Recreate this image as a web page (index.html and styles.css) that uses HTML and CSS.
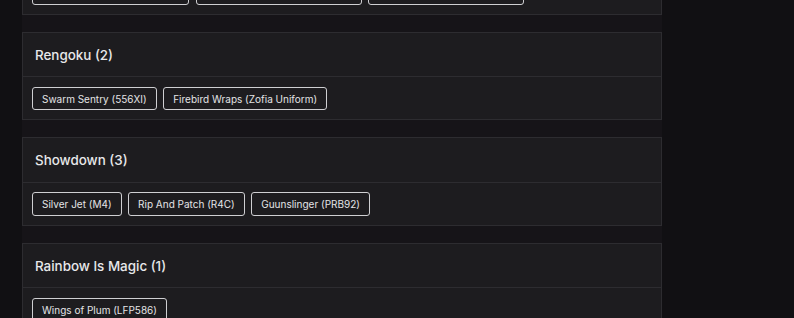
FILE: index.html
```html
<!DOCTYPE html>
<html lang="en">
<head>
<meta charset="utf-8">
<title>Collections</title>
<link rel="stylesheet" href="styles.css">
</head>
<body>
<main class="column">
  <section class="card">
    <header class="card-head"><h2 class="card-title">Outbreak (3)</h2></header>
    <div class="card-body">
      <span class="chip">Plague Doctor Masks (HX8B)</span>
      <span class="chip">Quarantine Zone (Hazmat Suit)</span>
      <span class="chip">Chimera Strain (R6S Hazard)</span>
    </div>
  </section>
  <section class="card">
    <header class="card-head"><h2 class="card-title">Rengoku (2)</h2></header>
    <div class="card-body">
      <span class="chip">Swarm Sentry (556XI)</span>
      <span class="chip">Firebird Wraps (Zofia Uniform)</span>
    </div>
  </section>
  <section class="card">
    <header class="card-head"><h2 class="card-title">Showdown (3)</h2></header>
    <div class="card-body">
      <span class="chip">Silver Jet (M4)</span>
      <span class="chip">Rip And Patch (R4C)</span>
      <span class="chip">Guunslinger (PRB92)</span>
    </div>
  </section>
  <section class="card">
    <header class="card-head"><h2 class="card-title">Rainbow Is Magic (1)</h2></header>
    <div class="card-body">
      <span class="chip">Wings of Plum (LFP586)</span>
    </div>
  </section>
</main>
</body>
</html>
```
FILE: styles.css
```css
html, body {
  margin: 0;
  padding: 0;
  background: #111013;
  height: 100%;
  overflow: hidden;
}
body {
  font-family: Inter, "Open Sans", sans-serif;
  color: #e6e6e8;
}
.column {
  margin-left: 22px;
  width: 640px;
  margin-top: -73.5px;
  background: #161418;
  display: flex;
  flex-direction: column;
  gap: 17px;
  padding-bottom: 200px;
}
.card {
  background: #1d1c1f;
  border: 1px solid #2d2c30;
}
.card-head {
  border-bottom: 1px solid #2d2c30;
  height: 43.3px;
  display: flex;
  align-items: center;
  padding: 0 12px;
}
.card-title {
  margin: 0;
  font-size: 13.4px;
  font-weight: 500;
  color: #e8e8ea;
}
.card-body {
  box-sizing: border-box;
  padding: 9.7px 9px 9px;
  display: flex;
  gap: 6.5px;
  align-items: flex-start;
}
.chip {
  display: inline-flex;
  align-items: center;
  height: 23.5px;
  box-sizing: border-box;
  padding: 0 9px;
  border: 1px solid #cfcfd2;
  border-radius: 3px;
  font-size: 10px;
  color: #e4e4e6;
  white-space: nowrap;
}
```
